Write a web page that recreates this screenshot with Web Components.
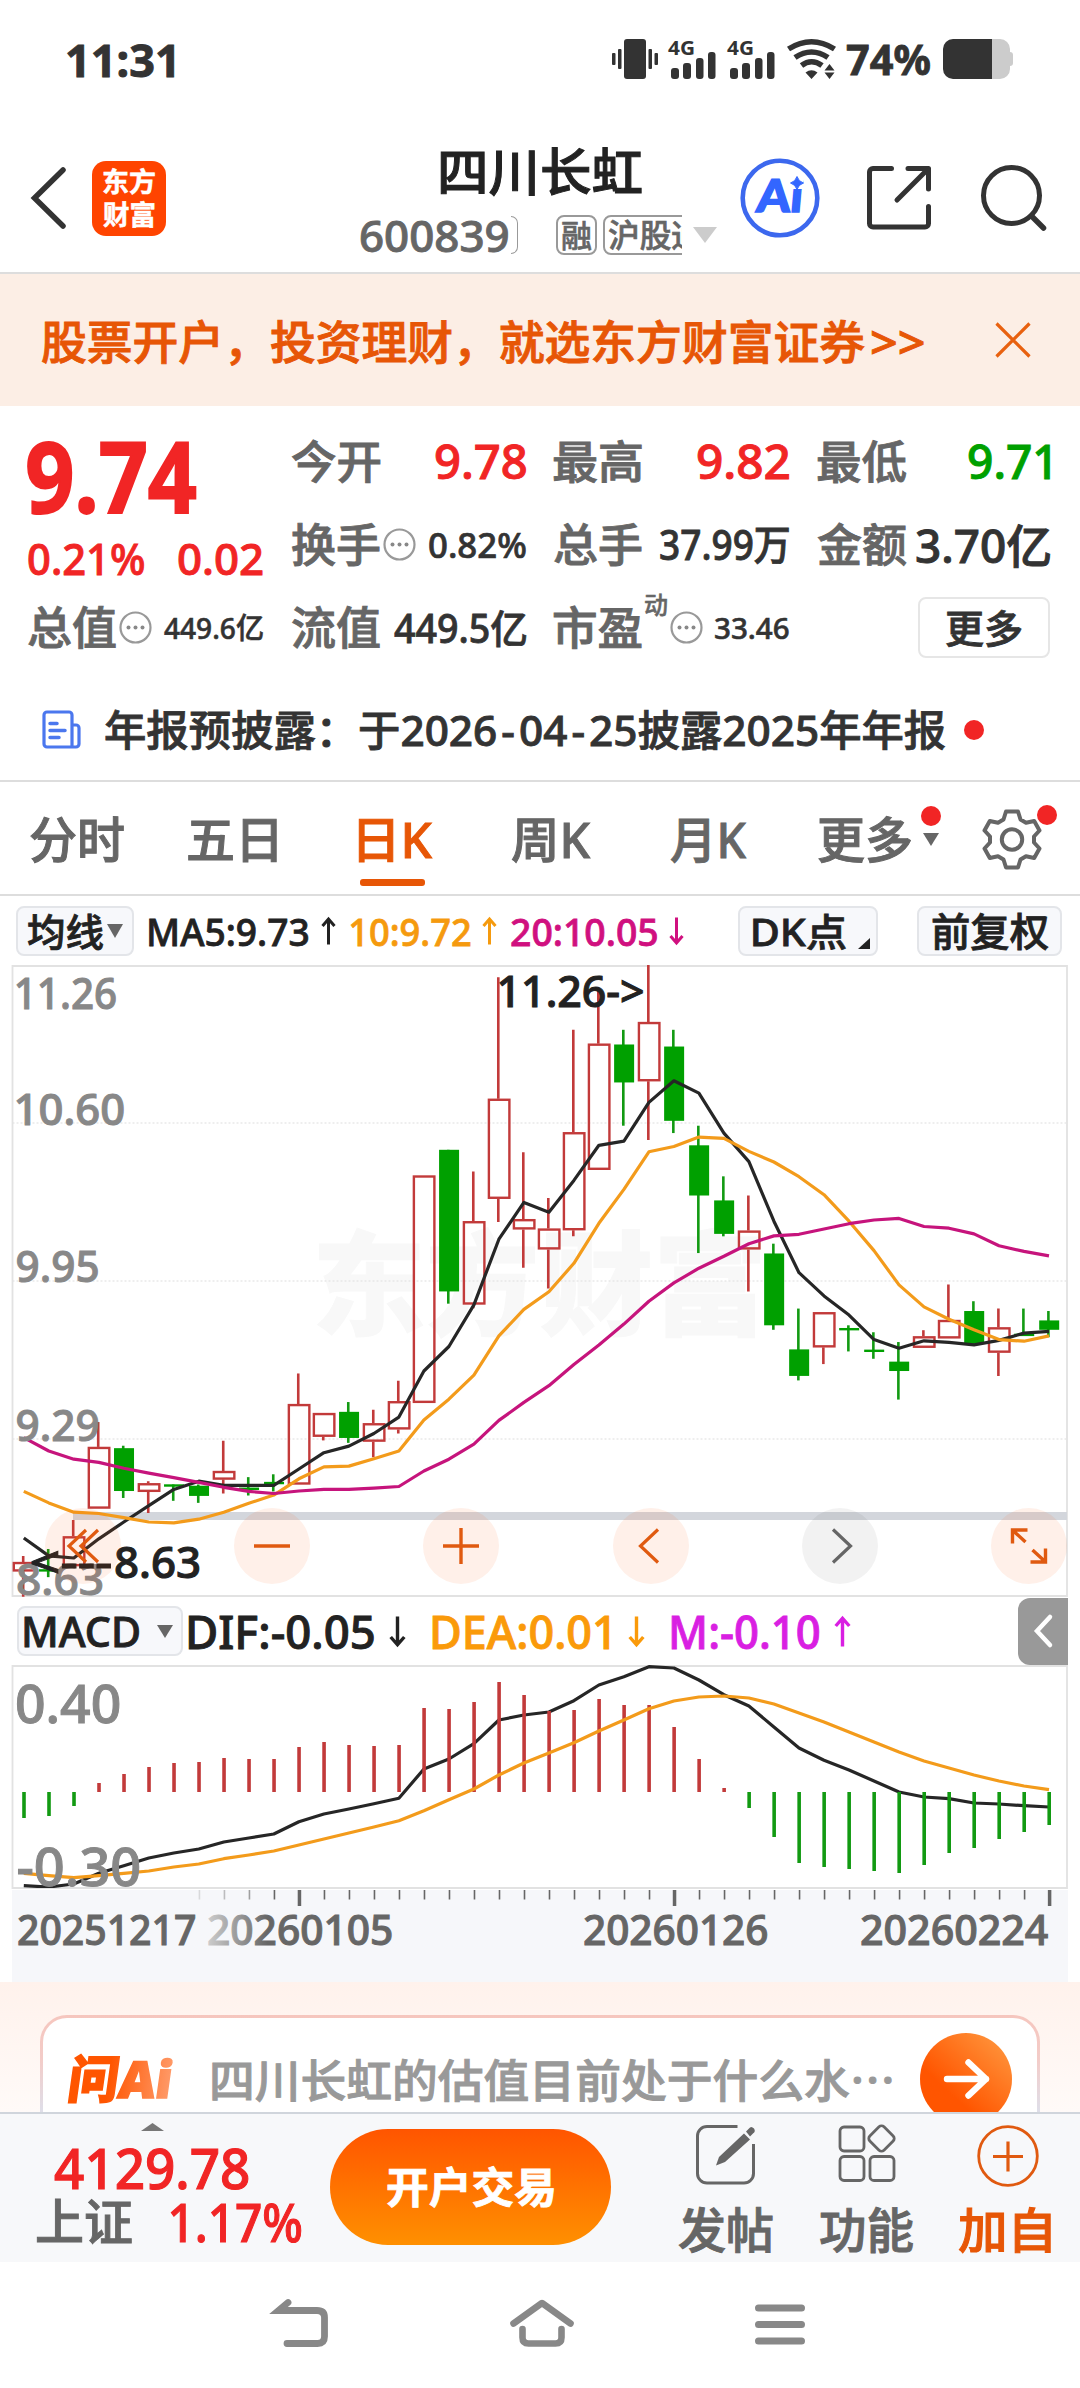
<!DOCTYPE html>
<html lang="zh-CN">
<head>
<meta charset="utf-8">
<title>四川长虹 600839</title>
<style>
    body {
        margin: 0;
        width: 1080px;
        background: #fff;
        color: #333;
        font-family: "Noto Sans", "Noto Sans CJK SC", sans-serif;
        font-weight: 500;
    }
</style>
</head>
<body>
<stock-page></stock-page>

<script>
const RED = "#f12525";
const GREEN = "#00a000";
const ORANGE = "#e75606";
const FAMILY = '"Noto Sans", "Noto Sans CJK SC", sans-serif';

const canvas = document.createElement("canvas").getContext("2d");

// Ink extents of a text, so that it can be fitted to a column exactly
function inkBox(text, font) {
    canvas.font = font;
    const m = canvas.measureText(text);
    return { left: m.actualBoundingBoxLeft, width: m.actualBoundingBoxLeft + m.actualBoundingBoxRight };
}

const ICONS = {
    vibrate: [46, 40, `<g fill="#333"><rect x="12" width="22" height="40" rx="3"/><rect y="14" width="3.5" height="12" rx="1"/><rect x="6" y="10" width="3.5" height="20" rx="1"/><rect x="36.5" y="10" width="3.5" height="20" rx="1"/><rect x="42.5" y="14" width="3.5" height="12" rx="1"/></g>`],
    signal: [48, 40, `<g fill="#333"><text x="0" y="15.500" font-size="20" font-weight="700" textLength="27" lengthAdjust="spacingAndGlyphs">4G</text><rect x="3" y="29" width="8" height="11" rx="3"/><rect x="15" y="24" width="8" height="16" rx="3"/><rect x="28" y="19" width="7.500" height="21" rx="3"/><rect x="40" y="13" width="7.500" height="27" rx="3"/></g>`],
    wifi: [50, 40, `<g fill="none" stroke="#333" stroke-width="5.600"><path d="M1.500 10Q24.500-4.500 47.500 10"/><path d="M8 18.500Q24.500 7.500 41 18.500"/><path d="M14.500 26.500Q24.500 19 35 26.500"/></g><g fill="#333"><path d="M18.500 33.500Q24.500 29 30.500 33.500L24.500 40zM42.500 25l5 6.500h-10zM42.500 40l5-6.500h-10z"/></g>`],
    battery: [70, 40, `<path d="M49 0h8a10 10 0 0 1 10 10v20a10 10 0 0 1-10 10h-8zM67 13q3 0 3 3v8q0 3-3 3z" fill="#ccc"/><path d="M49 0H10A10 10 0 0 0 0 10v20a10 10 0 0 0 10 10h39z" fill="#333"/>`],
    back: [36, 62, `<path d="M33 3L4.500 31 33 59" fill="none" stroke="#333" stroke-width="5.500" stroke-linecap="round" stroke-linejoin="miter"/>`],
    ai: [80, 80, `<circle cx="40" cy="40" r="37.300" fill="none" stroke="#3c68ee" stroke-width="4.600"/><text x="16" y="54" font-size="45" font-weight="900" font-family="Lato" fill="#3366ff" stroke="#3366ff" stroke-width="1.500" textLength="46" lengthAdjust="spacingAndGlyphs" transform="translate(4.500 0) skewX(-5)">Ai</text><path d="M49 14h14v17H49z" fill="#fff"/><path d="M57 18.500q1.500 5 6.500 6.500-5 1.500-6.500 6.500-1.500-5-6.500-6.500 5-1.500 6.500-6.500z" fill="#3366ff" stroke="#3366ff" stroke-width="1"/>`],
    share: [64, 64, `<path d="M24.500 2.500H6a3.500 3.500 0 0 0-3.500 3.500V57.500a3.500 3.500 0 0 0 3.500 3.500H58a3.500 3.500 0 0 0 3.500-3.500V40.500M41 2.500H61.500V23M60.500 3.500L30 34" fill="none" stroke="#333" stroke-width="5" stroke-linecap="round" stroke-linejoin="round"/>`],
    search: [66, 66, `<circle cx="30.500" cy="30.500" r="28" fill="none" stroke="#333" stroke-width="5"/><path d="M50.500 51L62.500 63" stroke="#333" stroke-width="5.500" stroke-linecap="round"/>`],
    close: [36, 36, `<path d="M1.500 1.500L34.500 34.500M34.500 1.500L1.500 34.500" stroke="#e8610f" stroke-width="3.200"/>`],
    more: [33, 33, `<circle cx="16.500" cy="16.500" r="15" fill="none" stroke="#999" stroke-width="2.200"/><g fill="#888"><circle cx="9.500" cy="16.500" r="2"/><circle cx="16.500" cy="16.500" r="2"/><circle cx="23.500" cy="16.500" r="2"/></g>`],
    news: [39, 40, `<g fill="none" stroke="#4b77ee" stroke-width="3.200" stroke-linejoin="round"><path d="M2 5a3 3 0 0 1 3-3H27a3 3 0 0 1 3 3V37H5a3 3 0 0 1-3-3zM30 15h4a3 3 0 0 1 3 3V34a3 3 0 0 1-3 3H30"/><path d="M8 13.500h7M8 20.500h15M8 27.500h9" stroke-linecap="round" stroke-width="3.500"/></g>`],
    gear: [58, 60, `<g fill="none" stroke="#666" stroke-width="4" stroke-linejoin="round"><path d="M23 2.500h12l2.500 8 5.500 3.300 8.200-1.800 5.300 9.500-5.500 6v6l5.500 6-5.300 9.500-8.200-1.800-5.500 3.300-2.500 8H23l-2.500-8-5.500-3.300-8.200 1.800L1.500 39.500l5.500-6v-6l-5.500-6L6.800 12l8.200 1.800 5.500-3.300z"/><circle cx="29" cy="30.500" r="10.200"/></g>`],
    up: [15, 28, `<path d="M7.500 27.500V2M1.500 9L7.500 2l6 7" fill="none" stroke="currentColor" stroke-width="3"/>`],
    down: [15, 28, `<path d="M7.500 .5V26M1.500 19L7.500 26l6-7" fill="none" stroke="currentColor" stroke-width="3"/>`],
    caret: [24, 16, `<path d="M0 0h24L12 16z" fill="currentColor"/>`],
    corner: [12, 11, `<path d="M12 0v11H0z" fill="#222"/>`],
    peak: [23, 8, `<path d="M0 8L11.500 0 23 8z" fill="#777"/>`],
    first: [36, 36, `<path d="M21 2L4 18 21 34M33 2L16 18 33 34" fill="none" stroke="#e05a10" stroke-width="3.200"/>`],
    minus: [36, 36, `<path d="M0 18h36" stroke="#e05a10" stroke-width="3.400"/>`],
    plus: [36, 36, `<path d="M0 18h36M18 0v36" stroke="#e05a10" stroke-width="3.400"/>`],
    prev: [36, 36, `<path d="M25 1.500L7.500 18 25 34.500" fill="none" stroke="#e05a10" stroke-width="3.200"/>`],
    next: [36, 36, `<path d="M11 1.500L28.500 18 11 34.500" fill="none" stroke="#666" stroke-width="3.200"/>`],
    expand: [36, 36, `<path d="M1.500 15.500V2H16.500M2.500 3L14.500 14M34.500 20.500V34H19.500M33.500 33L21.500 22" fill="none" stroke="#e05a10" stroke-width="3.400"/>`],
    collapse: [18, 32, `<path d="M16 2L3 16 16 30" fill="none" stroke="#fff" stroke-width="4.500" stroke-linecap="round"/>`],
    go: [92, 92, `<defs><linearGradient id="g" x1=".9" y1="0" x2=".2" y2=".75"><stop offset="0" stop-color="#ff983f"/><stop offset=".85" stop-color="#ff5500"/></linearGradient></defs><circle cx="46" cy="46" r="46" fill="url(#g)"/><path d="M27 46H66M48.500 29.500L66 46 48.500 62.500" fill="none" stroke="#fff" stroke-width="6.400" stroke-linecap="round" stroke-linejoin="round"/>`],
    post: [60, 60, `<path d="M41.500 1.500H11A9.500 9.500 0 0 0 1.500 11V48.500A9.500 9.500 0 0 0 11 58H48A9.500 9.500 0 0 0 57.500 48.500V19" fill="none" stroke="#666" stroke-width="3"/><path d="M48 8.500L54 14.500 29 37 20 40.500 23 32z" fill="#666"/><path d="M50 6.500l3-3q2-3 5 0 2 3-1 5l-3 3z" fill="#666"/>`],
    grid: [58, 58, `<g fill="none" stroke="#666" stroke-width="2.800"><rect x="2" y="2" width="24" height="24" rx="4"/><rect x="2" y="31.500" width="24" height="24" rx="4"/><rect x="32" y="31.500" width="24" height="24" rx="4"/><rect x="33.500" y="3.500" width="20" height="20" rx="3.500" transform="rotate(45 43.500 13.500)"/></g>`],
    add: [62, 62, `<circle cx="31" cy="31" r="29.300" fill="none" stroke="#e05a10" stroke-width="2.800"/><path d="M16 31.500H46M31 16.500V46.500" stroke="#e05a10" stroke-width="3.200"/>`],
    navback: [54, 48, `<path d="M14 3.500L4.500 11.500H43Q50.500 11.500 50.500 18.500V37.500Q50.500 44.500 43.500 44.500H13" fill="none" stroke="#888" stroke-width="6.800" stroke-linecap="round"/>`],
    home: [64, 48, `<path d="M3.500 24.500L32 4 60.500 24.500M12.500 30V38.500Q12.500 44.500 18.500 44.500H45.500Q51.500 44.500 51.500 38.500V30" fill="none" stroke="#888" stroke-width="6.600" stroke-linecap="round" stroke-linejoin="round"/>`],
    menu: [50, 42, `<path d="M3.500 4H46.500M3.500 20.500H46.500M3.500 37H46.500" stroke="#888" stroke-width="7" stroke-linecap="round"/>`]
};

class AppIcon extends HTMLElement {
    connectedCallback() {
        const [w, h, body] = ICONS[this.getAttribute("name")];
        const width = this.getAttribute("w") || w;
        const height = this.getAttribute("h") || h;
        this.attachShadow({ mode: "open" }).innerHTML = `
            <style>
                :host { display: block; flex: none; width: ${width}px; height: ${height}px; }
                svg { display: block; overflow: visible; }
            </style>
            <svg width="${width}" height="${height}" viewBox="0 0 ${w} ${h}" preserveAspectRatio="none">${body}</svg>
        `;
    }
}

// One line of text, stretched so that its ink is exactly `w` pixels wide
class FitText extends HTMLElement {
    connectedCallback() {
        const w = Number(this.getAttribute("w"));
        const size = Number(this.getAttribute("size"));
        this.attachShadow({ mode: "open" }).innerHTML = `
            <style>
                :host { display: block; flex: none; width: ${w}px; height: ${size}px; font-size: ${size}px; line-height: ${size}px; white-space: nowrap; -webkit-text-stroke: .02em currentColor; }
                span { display: block; width: max-content; transform-origin: 0 50%; }
            </style>
            <span><slot></slot></span>
        `;
        const style = getComputedStyle(this);
        const ink = inkBox(this.textContent, `${style.fontStyle} ${style.fontWeight} ${size}px ${style.fontFamily}`);
        const scale = w / ink.width;
        this.shadowRoot.querySelector("span").style.transform = `scaleX(${scale}) translateX(${ink.left}px)`;
    }
}

class StatusBar extends HTMLElement {
    connectedCallback() {
        this.attachShadow({ mode: "open" }).innerHTML = `
            <style>
                :host { display: flex; align-items: center; height: 118px; padding: 0 67px 0 67px; font-weight: 700; box-sizing: border-box; }
                .icons { display: flex; align-items: center; margin-left: auto; }
            </style>
            <fit-text w="107" size="45">11:31</fit-text>
            <div class="icons">
                <app-icon name="vibrate"></app-icon>
                <app-icon name="signal" style="margin-left:10px"></app-icon>
                <app-icon name="signal" style="margin-left:11px"></app-icon>
                <app-icon name="wifi" style="margin-left:12px"></app-icon>
                <fit-text w="83" size="42" style="margin-left:10px">74%</fit-text>
                <app-icon name="battery" style="margin-left:13px"></app-icon>
            </div>
        `;
    }
}

class AppHeader extends HTMLElement {
    connectedCallback() {
        this.attachShadow({ mode: "open" }).innerHTML = `
            <style>
                :host { display: flex; align-items: center; height: 156px; padding: 6px 0 0 30px; box-sizing: border-box; border-bottom: 2px solid #ddd; }
                .logo { display: grid; align-content: center; justify-content: center; gap: 6px; margin-left: 26px; width: 74px; height: 75px; border-radius: 14px; background: #ff4400; color: #fff; font-weight: 700; }
                .title { margin-left: 195px; width: 356px; height: 104px; color: #222; }
                .title > fit-text { margin-left: 80px; }
                .sub { display: flex; align-items: center; height: 40px; margin-top: 18px; color: #666; }
                .cut { width: 6px; height: 36px; margin-left: 3px; border: 1.500px solid #999; border-left: 0; border-radius: 0 9px 9px 0; }
                .tag { display: flex; align-items: center; height: 36px; border: 2px solid #999; border-radius: 8px; padding: 0 4px; font-size: 31px; }
                .tag.rong { margin-left: 38px; }
                .clip { width: 80px; overflow: hidden; margin-left: 6px; }
                .clip .tag { width: 100px; }
            </style>
            <app-icon name="back"></app-icon>
            <div class="logo"><fit-text w="52" size="27">东方</fit-text><fit-text w="52" size="27">财富</fit-text></div>
            <div class="title">
                <fit-text w="201" size="51">四川长虹</fit-text>
                <div class="sub">
                    <fit-text w="147" size="43">600839</fit-text>
                    <span class="cut"></span>
                    <div class="tag rong"><fit-text w="29" size="31">融</fit-text></div>
                    <div class="clip"><div class="tag"><fit-text w="94" size="32">沪股通</fit-text></div></div>
                    <app-icon name="caret" style="margin-left:11px;color:#ccc"></app-icon>
                </div>
            </div>
            <app-icon name="ai" style="margin-left:23px"></app-icon>
            <app-icon name="share" style="margin-left:47px"></app-icon>
            <app-icon name="search" style="margin-left:50px"></app-icon>
        `;
    }
}

class PromoBanner extends HTMLElement {
    connectedCallback() {
        this.attachShadow({ mode: "open" }).innerHTML = `
            <style>
                :host { display: flex; align-items: center; height: 132px; padding: 2px 49px 0 42px; box-sizing: border-box; background: #fceee5; color: ${ORANGE}; }
                app-icon { margin: -3px 0 0 auto; }
            </style>
            <fit-text w="823" size="46">股票开户，投资理财，就选东方财富证券</fit-text>
            <fit-text w="52" size="46" style="margin-left:7px">&gt;&gt;</fit-text>
            <app-icon name="close"></app-icon>
        `;
    }
}

class QuotePanel extends HTMLElement {
    connectedCallback() {
        this.attachShadow({ mode: "open" }).innerHTML = `
            <style>
                :host { display: grid; grid-template-columns: 235px 234px 235px 232px; column-gap: 28.500px; height: 263px; padding: 14px 0 0 28px; box-sizing: border-box; color: #333; }
                .col > div { display: flex; align-items: center; justify-content: space-between; height: 83px; }
                .col .price { height: 109px; color: ${RED}; font-weight: 700; }
                .col .change { height: 57px; color: ${RED}; }
                .name { color: #666; }
                .red { color: ${RED}; }
                .green { color: ${GREEN}; }
                .label { display: flex; align-items: center; gap: 3px; color: #666; }
                .dyn { align-self: flex-start; margin-top: -12px; }
                .btn { display: flex; align-items: center; justify-content: center; width: 131px; height: 57px; margin-left: 100px; border: 2px solid #e6e6e6; border-radius: 8px; }
            </style>
            <div class="col">
                <div class="price"><fit-text w="168" size="98">9.74</fit-text></div>
                <div class="change"><fit-text w="116" size="44">0.21%</fit-text><fit-text w="85" size="44">0.02</fit-text></div>
                <div><span class="label"><fit-text w="88" size="45">总值</fit-text><app-icon name="more"></app-icon></span><fit-text w="99" size="29">449.6亿</fit-text></div>
            </div>
            <div class="col">
                <div><fit-text class="name" w="88" size="45">今开</fit-text><fit-text class="red" w="90" size="47">9.78</fit-text></div>
                <div><span class="label"><fit-text w="88" size="45">换手</fit-text><app-icon name="more"></app-icon></span><fit-text w="97" size="35">0.82%</fit-text></div>
                <div><fit-text class="name" w="88" size="45">流值</fit-text><fit-text w="132" size="39">449.5亿</fit-text></div>
            </div>
            <div class="col">
                <div><fit-text class="name" w="88" size="45">最高</fit-text><fit-text class="red" w="91" size="47">9.82</fit-text></div>
                <div><fit-text class="name" w="88" size="45">总手</fit-text><fit-text w="129" size="41">37.99万</fit-text></div>
                <div><span class="label"><fit-text w="88" size="45">市盈</fit-text><fit-text class="dyn" w="22" size="24">动</fit-text><app-icon name="more"></app-icon></span><fit-text w="74" size="29">33.46</fit-text></div>
            </div>
            <div class="col">
                <div><fit-text class="name" w="88" size="45">最低</fit-text><fit-text class="green" w="81" size="47">9.71</fit-text></div>
                <div><fit-text class="name" w="88" size="45">金额</fit-text><fit-text w="134" size="46">3.70亿</fit-text></div>
                <div><span class="btn"><fit-text w="75" size="39">更多</fit-text></span></div>
            </div>
        `;
    }
}

class NoticeLine extends HTMLElement {
    connectedCallback() {
        this.attachShadow({ mode: "open" }).innerHTML = `
            <style>
                :host { display: flex; align-items: center; height: 111px; padding: 11px 0 0 42px; box-sizing: border-box; }
                b { padding: 0 4px; font-weight: 500; }
                i { width: 20px; height: 20px; border-radius: 50%; background: ${RED}; margin-left: 35px; }
            </style>
            <app-icon name="news"></app-icon>
            <fit-text w="824" size="42" style="margin-left:24px">年报预披露：于2026<b>-</b>04<b>-</b>25披露2025年年报</fit-text>
            <i></i>
        `;
    }
}

class PeriodTabs extends HTMLElement {
    connectedCallback() {
        this.attachShadow({ mode: "open" }).innerHTML = `
            <style>
                :host { display: flex; align-items: center; height: 116px; padding: 2px 0 0 30px; box-sizing: border-box; border: solid #ddd; border-width: 2px 0; color: #666; }
                .active { position: relative; color: ${ORANGE}; }
                .active::after { content: ""; position: absolute; left: 1px; bottom: -22px; width: 65px; height: 7px; border-radius: 3px; background: ${ORANGE}; }
                .badge { position: relative; }
                .badge::after { content: ""; position: absolute; top: var(--top); right: var(--right); width: 20px; height: 20px; border-radius: 50%; background: ${RED}; }
            </style>
            <fit-text w="94" size="49">分时</fit-text>
            <fit-text w="89" size="49" style="margin-left:64px">五日</fit-text>
            <div class="active" style="margin-left:82px"><fit-text w="73" size="49">日K</fit-text></div>
            <fit-text w="78" size="49" style="margin-left:80px">周K</fit-text>
            <fit-text w="75" size="49" style="margin-left:81px">月K</fit-text>
            <fit-text w="92" size="49" style="margin-left:73px">更多</fit-text>
            <div class="badge" style="margin-left:12px;--top:-27px;--right:-2px"><app-icon name="caret" w="16" h="13"></app-icon></div>
            <div class="badge" style="margin-left:44px;--top:-4px;--right:-16px"><app-icon name="gear"></app-icon></div>
        `;
    }
}

class ChipButton extends HTMLElement {
    connectedCallback() {
        this.attachShadow({ mode: "open" }).innerHTML = `
            <style>
                :host { display: flex; flex: none; align-items: center; width: ${this.getAttribute("w")}px; height: 50px; box-sizing: border-box; border: 2px solid #e3e5e9; border-radius: 8px; background: #f7f8fb; color: #222; }
            </style>
            <slot></slot>
        `;
    }
}

class MaBar extends HTMLElement {
    connectedCallback() {
        this.attachShadow({ mode: "open" }).innerHTML = `
            <style>
                :host { display: flex; align-items: center; height: 69px; padding-left: 16px; box-sizing: border-box; color: #222; }
            </style>
            <chip-button w="118"><fit-text w="75" size="38" style="margin-left:10px">均线</fit-text><app-icon name="caret" w="16" h="14" style="margin-left:4px;color:#666"></app-icon></chip-button>
            <fit-text w="159" size="38" style="margin-left:15px">MA5:9.73</fit-text>
            <app-icon name="up" style="margin-left:13px"></app-icon>
            <fit-text w="119" size="38" style="margin-left:15px;color:#f59a0e">10:9.72</fit-text>
            <app-icon name="up" style="margin-left:12px;color:#f59a0e"></app-icon>
            <fit-text w="146" size="38" style="margin-left:14px;color:#d0107f">20:10.05</fit-text>
            <app-icon name="down" style="margin-left:12px;color:#d0107f"></app-icon>
            <chip-button w="140" style="margin-left:54px"><fit-text w="93" size="38" style="margin-left:13px">DK点</fit-text><app-icon name="corner" style="margin:26px 0 0 12px"></app-icon></chip-button>
            <chip-button w="145" style="margin-left:39px"><fit-text w="116" size="39" style="margin-left:13px">前复权</fit-text></chip-button>
        `;
    }
}

// [high, body top, body bottom, low, rising], in plot units measured from the top edge
const CANDLES = [
    [1460, 1475, 1498, 1560, 1], [1443, 1495, 1495, 1512, 0], [1372, 1412, 1485, 1488, 1], [1132, 1193, 1344, 1344, 1],
    [1190, 1196, 1301, 1318, 0], [1277, 1282, 1303, 1355, 1], [1285, 1287, 1287, 1325, 0], [1285, 1288, 1313, 1330, 0],
    [1178, 1252, 1273, 1307, 1], [1267, 1295, 1295, 1312, 0], [1260, 1281, 1281, 1302, 0], [1013, 1088, 1285, 1285, 1],
    [1110, 1110, 1168, 1177, 1], [1083, 1107, 1171, 1183, 0], [1102, 1135, 1180, 1218, 1], [1031, 1081, 1150, 1160, 1],
    [528, 528, 1085, 1085, 1], [465, 465, 812, 842, 0], [518, 640, 844, 853, 1], [42, 340, 585, 642, 1],
    [471, 635, 660, 754, 1], [583, 658, 709, 805, 1], [171, 422, 662, 677, 1], [72, 205, 514, 514, 1],
    [171, 207, 300, 406, 0], [12, 152, 297, 441, 1], [171, 212, 394, 424, 0], [406, 454, 577, 718, 0],
    [530, 589, 671, 677, 0], [577, 663, 709, 812, 1], [695, 719, 895, 906, 0], [854, 954, 1019, 1030, 0],
    [863, 863, 949, 990, 1], [895, 904, 904, 959, 0], [912, 957, 957, 977, 0], [936, 984, 1007, 1077, 0],
    [907, 922, 950, 950, 1], [795, 882, 927, 927, 1], [836, 860, 939, 943, 0], [854, 900, 962, 1019, 1],
    [854, 918, 918, 921, 0], [860, 883, 906, 924, 0]
];
const MA5 = [1416, 1460, 1465, 1418, 1377, 1337, 1297, 1277, 1287, 1287, 1287, 1247, 1207, 1191, 1160, 1120, 1007, 947, 845, 684, 594, 618, 540, 454, 444, 349, 296, 326, 424, 494, 640, 766, 823, 870, 930, 951, 933, 937, 943, 932, 914, 910];
const MA10 = [1302, 1330, 1353, 1356, 1366, 1377, 1379, 1370, 1353, 1331, 1311, 1271, 1242, 1240, 1222, 1203, 1127, 1076, 1017, 921, 856, 813, 743, 645, 562, 470, 457, 434, 437, 469, 495, 531, 575, 640, 712, 796, 850, 880, 906, 930, 934, 921];
const MA20 = [1170, 1203, 1223, 1231, 1245, 1257, 1268, 1280, 1292, 1302, 1307, 1301, 1297, 1297, 1294, 1290, 1252, 1223, 1186, 1128, 1084, 1043, 991, 943, 892, 836, 791, 755, 726, 695, 676, 672, 659, 646, 637, 633, 653, 657, 671, 700, 714, 725];
const HIST = [714, 708, 678, 609, 582, 561, 549, 546, 534, 537, 537, 501, 486, 495, 498, 495, 384, 387, 366, 306, 345, 393, 390, 357, 375, 375, 441, 537, 624, 684, 771, 849, 861, 867, 873, 879, 855, 819, 804, 777, 756, 735];
const DIF = [917, 921, 912, 880, 857, 834, 819, 807, 786, 774, 762, 725, 702, 687, 671, 655, 567, 537, 491, 420, 405, 396, 362, 315, 290, 260, 264, 300, 344, 378, 441, 504, 541, 570, 603, 636, 651, 656, 669, 672, 677, 681];
const DEA = [880, 887, 893, 887, 880, 873, 861, 852, 836, 825, 813, 795, 777, 759, 741, 722, 692, 659, 627, 585, 549, 519, 488, 453, 420, 386, 363, 351, 348, 354, 372, 399, 426, 456, 486, 516, 543, 564, 585, 603, 618, 629];
const UP_COLOR = "#c23a3a";
const DOWN_COLOR = "#129a12";

const slotX = (i) => 23.8 + i * 25.005;
const polyline = (values, y, color) =>
    `<polyline points="${values.map((v, i) => `${slotX(i).toFixed(1)},${y(v).toFixed(1)}`).join(" ")}" fill="none" stroke="${color}" stroke-width="3.200" stroke-linejoin="round"/>`;

function svgText(text, x, baseline, width, size, fill, weight = 500) {
    const ink = inkBox(text, `${weight} ${size}px ${FAMILY}`);
    const safe = text.replace(/</g, "&lt;").replace(/>/g, "&gt;");
    return `<text transform="translate(${x} ${baseline}) scale(${(width / ink.width).toFixed(4)} 1)" x="${ink.left}" font-size="${size}" font-weight="${weight}" fill="${fill}" stroke="${fill}" stroke-width="1">${safe}</text>`;
}

class KlineChart extends HTMLElement {
    connectedCallback() {
        const y = (v) => 960 + v / 2.45;
        const candles = CANDLES.map(([high, top, bottom, low, rising], i) => {
            const x = slotX(i);
            const color = rising ? UP_COLOR : DOWN_COLOR;
            if (rising) {
                return `<path d="M${x - .6} ${y(high)}V${y(top)}M${x - .6} ${y(bottom)}V${y(low)}" stroke="${color}" stroke-width="2.600"/>
                    <rect x="${x - 10}" y="${y(top) + 1}" width="20.500" height="${y(bottom) - y(top) - 2}" fill="none" stroke="${color}" stroke-width="2.400"/>`;
            }
            const height = Math.max(y(bottom) - y(top), 2.4);
            return `<path d="M${x - .6} ${y(high)}V${y(low)}" stroke="${color}" stroke-width="2.600"/>
                <rect x="${x - 9.800}" y="${y(top) - (top === bottom ? 1 : 0)}" width="20" height="${height}" fill="${GREEN}"/>`;
        }).join("");
        const tools = ["first", "minus", "plus", "prev", "next", "expand"];
        this.attachShadow({ mode: "open" }).innerHTML = `
            <style>
                :host { display: block; position: relative; height: 632px; }
                svg { display: block; }
                .tools { position: absolute; left: 45px; right: 13px; top: 543px; display: flex; justify-content: space-between; }
                .tools div { display: grid; place-items: center; width: 76px; height: 76px; border-radius: 50%; background: rgba(255, 96, 20, .095); }
                .tools div.next { background: rgba(0, 0, 0, .05); }
            </style>
            <svg width="1080" height="632" viewBox="0 965 1080 632">
                ${svgText("东方财富", 317, 1326, 443, 113, "#f8f8f8", 900)}
                <path d="M12.500 1123H1067M12.500 1281H1067M12.500 1439H1067" stroke="#ddd" stroke-width="1.200" stroke-dasharray="2 2"/>
                <path d="M12.500 966H1067V1596H12.500z" fill="none" stroke="#e2e2e2" stroke-width="1.800"/>
                <rect x="73" y="1512" width="994" height="8" fill="#d3d6dc"/>
                ${candles}
                ${polyline(MA5, y, "#262626")}
                ${polyline(MA10, y, "#f39b1b")}
                ${polyline(MA20, y, "#c6147c")}
                ${svgText("11.26", 16.500, 1009, 99.500, 44, "#888")}
                ${svgText("10.60", 16.500, 1124.500, 107.500, 44, "#888")}
                ${svgText("9.95", 16.500, 1282, 81, 44, "#888")}
                ${svgText("9.29", 16.500, 1440.500, 82, 44, "#888")}
                ${svgText("8.63", 17, 1595, 85, 44, "#888")}
                ${svgText("11.26->", 499.500, 1007, 144, 44, "#222")}
                ${svgText("<---", 32, 1578, 79, 44, "#222")}
                ${svgText("8.63", 115, 1578, 84, 44, "#222")}
            </svg>
            <div class="tools">${tools.map((name) => `<div class="${name}"><app-icon name="${name}"></app-icon></div>`).join("")}</div>
        `;
    }
}

class MacdBar extends HTMLElement {
    connectedCallback() {
        this.attachShadow({ mode: "open" }).innerHTML = `
            <style>
                :host { display: flex; align-items: center; height: 68px; padding: 0 12px 0 17px; box-sizing: border-box; color: #222; }
                .fold { display: flex; align-items: center; justify-content: center; width: 50px; height: 67px; margin-left: auto; border-radius: 12px 0 0 12px; background: #999; }
            </style>
            <chip-button w="166"><fit-text w="115" size="41" style="margin-left:5px">MACD</fit-text><app-icon name="caret" w="16" h="13" style="margin-left:18px;color:#666"></app-icon></chip-button>
            <fit-text w="185" size="45" style="margin-left:6px">DIF:-0.05</fit-text>
            <app-icon name="down" w="17" h="31" style="margin-left:15px"></app-icon>
            <fit-text w="176" size="45" style="margin-left:27px;color:#fa9a0a">DEA:0.01</fit-text>
            <app-icon name="down" w="17" h="31" style="margin-left:19px;color:#fa9a0a"></app-icon>
            <fit-text w="147" size="45" style="margin-left:27px;color:#d91fe2">M:-0.10</fit-text>
            <app-icon name="up" w="17" h="31" style="margin-left:15px;color:#d91fe2"></app-icon>
            <div class="fold"><app-icon name="collapse"></app-icon></div>
        `;
    }
}

class MacdChart extends HTMLElement {
    connectedCallback() {
        const y = (v) => 1580 + v / 3;
        const bars = HIST.map((v, i) =>
            `<path d="M${slotX(i) + .2} 1792V${y(v)}" stroke="${v < 636 ? UP_COLOR : DOWN_COLOR}" stroke-width="3.600"/>`).join("");
        let ticks = "";
        for (let i = 7; i < 42; i++) {
            const major = i % 15 === 11;
            ticks += `<path d="M${slotX(i) + .6} 1890V${major ? 1906 : 1899.5}" stroke="#666" stroke-width="${major ? 3.5 : 1.6}" opacity="${i < 10 ? (i - 6) / 5 : 1}"/>`;
        }
        this.attachShadow({ mode: "open" }).innerHTML = `
            <style>
                :host { display: block; height: 317px; }
                svg { display: block; }
            </style>
            <svg width="1080" height="317" viewBox="0 1665 1080 317">
                <defs>
                    <linearGradient id="fade" gradientUnits="userSpaceOnUse" x1="0" x2="60"><stop offset="0" stop-color="#ccc"/><stop offset="1" stop-color="#666"/></linearGradient>
                    <clipPath id="plot"><path d="M12 1665H1068V1888H12z"/></clipPath>
                </defs>
                <rect x="12" y="1890" width="1056" height="92" fill="#f6f7fa"/>
                <path d="M12.500 1666H1067V1888H12.500z" fill="none" stroke="#e2e2e2" stroke-width="1.800"/>
                <g clip-path="url(#plot)">
                    ${polyline(DIF, y, "#262626")}
                    ${bars}
                    ${polyline(DEA, y, "#f39b1b")}
                </g>
                ${svgText("0.40", 17, 1723, 102.500, 52, "#888")}
                ${svgText("-0.30", 17.500, 1886, 122, 52, "#888")}
                ${ticks}
                ${svgText("20251217", 18, 1944.500, 177, 41, "#666")}
                ${svgText("20260105", 208, 1944.500, 184, 41, "url(#fade)")}
                ${svgText("20260126", 584, 1944.500, 183, 41, "#666")}
                ${svgText("20260224", 861, 1944.500, 187, 41, "#666")}
            </svg>
        `;
    }
}

class AskAi extends HTMLElement {
    connectedCallback() {
        this.attachShadow({ mode: "open" }).innerHTML = `
            <style>
                :host { display: block; height: 130px; padding: 33px 40px 0; box-sizing: border-box; overflow: hidden; background: linear-gradient(#fff2ec, #fffaf8); }
                .card { display: flex; align-items: center; height: 121px; padding: 0 24px; border: 3px solid transparent; border-radius: 27px; background: linear-gradient(#fff, #fff) padding-box, linear-gradient(#f6c6be, #f3ccc8 35%, #dfdee8 75%) border-box; }
                svg { flex: none; display: block; overflow: visible; }
                .question { color: #999; font-family: "Noto Sans CJK SC", sans-serif; }
            </style>
            <div class="card">
                <svg width="106" height="48" viewBox="0 0 106 48">
                    <defs><linearGradient id="brand" gradientUnits="userSpaceOnUse" x1="45" x2="108"><stop offset="0" stop-color="#ff5500"/><stop offset="1" stop-color="#ff9a68"/></linearGradient></defs>
                    <text transform="skewX(-8)" x="5" y="43" font-size="51" font-weight="900" fill="url(#brand)" stroke="url(#brand)" stroke-width="1.500" textLength="104" lengthAdjust="spacingAndGlyphs">问Ai</text>
                </svg>
                <fit-text class="question" w="680" size="45.500" style="margin-left:39px">四川长虹的估值目前处于什么水…</fit-text>
                <app-icon name="go" style="margin-left:28px"></app-icon>
            </div>
        `;
    }
}

class BottomBar extends HTMLElement {
    connectedCallback() {
        this.attachShadow({ mode: "open" }).innerHTML = `
            <style>
                :host { display: flex; height: 150px; box-sizing: border-box; border-top: 2px solid #d0d5dc; background: #f7f8fa; color: #666; }
                .index { width: 264px; margin-left: 37px; padding-top: 9px; color: ${RED}; }
                .index > app-icon { margin-left: 104px; }
                .index > fit-text { margin: 8px 0 0 18px; }
                .row { display: flex; align-items: center; justify-content: space-between; height: 52px; margin-top: -1px; }
                .row fit-text:first-child { color: #666; }
                .trade { display: flex; align-items: center; justify-content: center; width: 281px; height: 116px; margin: 15px 0 0 29px; border-radius: 58px; background: linear-gradient(#ff5500, #ff9000); color: #fff; font-weight: 700; }
                .item { display: flex; flex-direction: column; align-items: center; justify-content: space-between; height: 140px; padding-top: 11px; box-sizing: border-box; }
            </style>
            <div class="index">
                <app-icon name="peak"></app-icon>
                <fit-text w="193" size="57">4129.78</fit-text>
                <div class="row"><fit-text w="95" size="49">上证</fit-text><fit-text w="130" size="53">1.17%</fit-text></div>
            </div>
            <div class="trade"><fit-text w="167" size="42">开户交易</fit-text></div>
            <div class="item" style="margin-left:68px"><app-icon name="post"></app-icon><fit-text w="94" size="48">发帖</fit-text></div>
            <div class="item" style="margin-left:47px"><app-icon name="grid"></app-icon><fit-text w="93" size="48">功能</fit-text></div>
            <div class="item" style="margin-left:46px;color:${ORANGE}"><app-icon name="add" style="margin-left:6px"></app-icon><fit-text w="92" size="48">加自</fit-text></div>
        `;
    }
}

class SystemNav extends HTMLElement {
    connectedCallback() {
        this.attachShadow({ mode: "open" }).innerHTML = `
            <style>
                :host { display: flex; align-items: center; justify-content: space-between; height: 126px; padding: 0 275px 4px 274px; box-sizing: border-box; }
            </style>
            <app-icon name="navback"></app-icon>
            <app-icon name="home"></app-icon>
            <app-icon name="menu" style="margin-top:4px"></app-icon>
        `;
    }
}

class StockPage extends HTMLElement {
    connectedCallback() {
        this.attachShadow({ mode: "open" }).innerHTML = `
            <style>
                :host { display: flex; flex-direction: column; width: 1080px; height: 2388px; overflow: hidden; background: #fff; }
                :host > * { flex: none; }
            </style>
            <status-bar></status-bar>
            <app-header></app-header>
            <promo-banner></promo-banner>
            <quote-panel></quote-panel>
            <notice-line></notice-line>
            <period-tabs></period-tabs>
            <ma-bar></ma-bar>
            <kline-chart></kline-chart>
            <macd-bar></macd-bar>
            <macd-chart></macd-chart>
            <ask-ai></ask-ai>
            <bottom-bar></bottom-bar>
            <system-nav></system-nav>
        `;
    }
}

customElements.define("app-icon", AppIcon);
customElements.define("fit-text", FitText);
customElements.define("chip-button", ChipButton);
customElements.define("status-bar", StatusBar);
customElements.define("app-header", AppHeader);
customElements.define("promo-banner", PromoBanner);
customElements.define("quote-panel", QuotePanel);
customElements.define("notice-line", NoticeLine);
customElements.define("period-tabs", PeriodTabs);
customElements.define("ma-bar", MaBar);
customElements.define("kline-chart", KlineChart);
customElements.define("macd-bar", MacdBar);
customElements.define("macd-chart", MacdChart);
customElements.define("ask-ai", AskAi);
customElements.define("bottom-bar", BottomBar);
customElements.define("system-nav", SystemNav);
customElements.define("stock-page", StockPage);
</script>
</body>
</html>
